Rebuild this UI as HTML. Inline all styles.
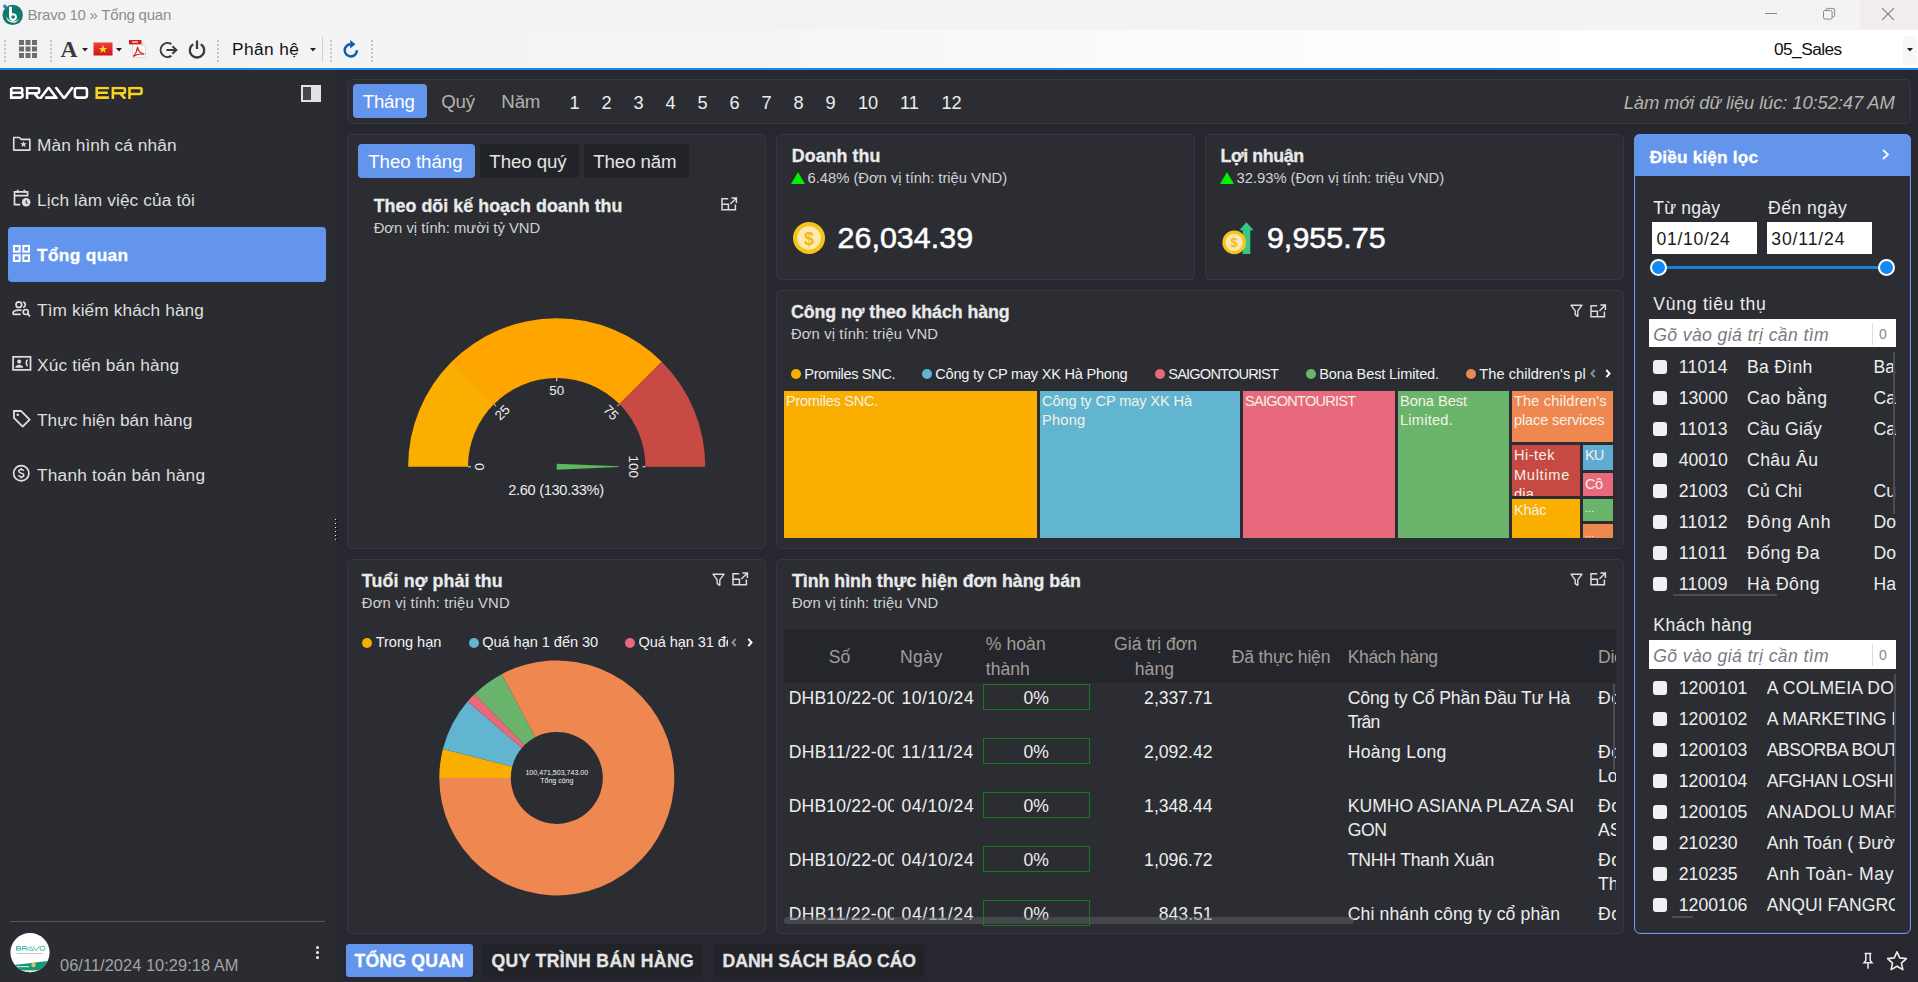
<!DOCTYPE html>
<html lang="vi"><head><meta charset="utf-8"><title>Bravo 10 - Tong quan</title>
<style>
html,body{margin:0;padding:0;}
body{width:1918px;height:982px;position:relative;overflow:hidden;background:#27282f;font-family:'Liberation Sans', sans-serif;}
.t{position:absolute;white-space:nowrap;display:block;}
.a{position:absolute;}

</style></head><body>
<div class="a" style="left:0px;top:0px;width:1918px;height:30px;background:#f3f3f3;"></div>
<div class="a" style="left:1860px;top:0px;width:58px;height:29px;background:#f2ecec;"></div>
<svg class="a" style="left:0.5px;top:2.5px;" width="23.4" height="23.4" viewBox="0 0 22 22"><circle cx="11" cy="11.2" r="9.6" fill="#0f7b68"/>
<path d="M5.2 12.5a6 6 0 0 0 11.6 2.2a6.8 6.8 0 0 1-11.6-2.2z" fill="#e9f4f1"/>
<path d="M7.6 3.6h2.7v6.1a3.7 3.7 0 1 1-2.7 3.5z" fill="#ffffff"/>
<circle cx="11.4" cy="13.2" r="1.7" fill="#0f7b68"/>
<circle cx="3.6" cy="3.2" r="1.7" fill="#2f7fe0"/></svg>
<span class="t" style="font-family:'Liberation Sans', sans-serif;font-size:15px;font-weight:400;color:#8d8d8d;line-height:20px;top:5px;letter-spacing:-0.234px;left:27.50px;">Bravo 10 » Tổng quan</span>
<div class="a" style="left:1765px;top:13px;width:12px;height:1px;background:#8a8a8a;"></div>
<svg class="a" style="left:1822px;top:7px;" width="14" height="14" viewBox="0 0 14 14"><rect x="1.5" y="3.5" width="8.6" height="8.6" rx="1.6" fill="none" stroke="#8a8a8a" stroke-width="1"/><path d="M4 3.4V3a1.6 1.6 0 0 1 1.6-1.6h5.4a1.6 1.6 0 0 1 1.6 1.6v5.4a1.6 1.6 0 0 1-1.6 1.6h-.6" fill="none" stroke="#8a8a8a" stroke-width="1"/></svg>
<svg class="a" style="left:1881px;top:7px;" width="14" height="14" viewBox="0 0 14 14"><path d="M1 1L13 13M13 1L1 13" stroke="#8a8a8a" stroke-width="1.1" fill="none"/></svg>
<div class="a" style="left:0px;top:30px;width:1918px;height:38px;background:linear-gradient(90deg,#f3f3f3 0%,#f4f4f4 35%,#fbfbfb 60%,#ffffff 85%);"></div>
<div class="a" style="left:0px;top:68px;width:1918px;height:2px;background:#1f86df;"></div>
<div class="a" style="left:4px;top:40px;width:2px;height:22px;background:repeating-linear-gradient(180deg,#c4c4c4 0 2px,transparent 2px 4px);"></div>
<div class="a" style="left:50px;top:40px;width:2px;height:22px;background:repeating-linear-gradient(180deg,#c4c4c4 0 2px,transparent 2px 4px);"></div>
<div class="a" style="left:217px;top:40px;width:2px;height:22px;background:repeating-linear-gradient(180deg,#c4c4c4 0 2px,transparent 2px 4px);"></div>
<div class="a" style="left:330px;top:40px;width:2px;height:22px;background:repeating-linear-gradient(180deg,#c4c4c4 0 2px,transparent 2px 4px);"></div>
<div class="a" style="left:371px;top:40px;width:2px;height:22px;background:repeating-linear-gradient(180deg,#c4c4c4 0 2px,transparent 2px 4px);"></div>
<svg class="a" style="left:19px;top:40px;" width="18" height="18" viewBox="0 0 18 18"><rect x="0.0" y="0.0" width="5" height="5" fill="#6e6e6e"/><rect x="6.5" y="0.0" width="5" height="5" fill="#6e6e6e"/><rect x="13.0" y="0.0" width="5" height="5" fill="#6e6e6e"/><rect x="0.0" y="6.5" width="5" height="5" fill="#6e6e6e"/><rect x="6.5" y="6.5" width="5" height="5" fill="#6e6e6e"/><rect x="13.0" y="6.5" width="5" height="5" fill="#6e6e6e"/><rect x="0.0" y="13.0" width="5" height="5" fill="#6e6e6e"/><rect x="6.5" y="13.0" width="5" height="5" fill="#6e6e6e"/><rect x="13.0" y="13.0" width="5" height="5" fill="#6e6e6e"/></svg>
<span class="t" style="font-family:'Liberation Serif', serif;font-size:23.5px;font-weight:700;color:#3a3a3a;line-height:31px;top:34px;letter-spacing:0.016px;left:60.50px;">A</span>
<svg class="a" style="left:82px;top:48px;" width="6" height="4" viewBox="0 0 6 4"><path d="M0 0H6L3 3.4Z" fill="#222"/></svg>
<svg class="a" style="left:93px;top:42px;" width="20" height="14" viewBox="0 0 20 14"><defs><linearGradient id="fg" x1="0" y1="0" x2="0" y2="1"><stop offset="0" stop-color="#e8453c"/><stop offset="1" stop-color="#d0140f"/></linearGradient></defs><rect x="0.5" y="0.5" width="19" height="13" fill="url(#fg)"/><path d="M10 2.8l1.05 3.1h3.3l-2.65 1.95 1 3.15L10 9.05 7.3 11l1-3.15L5.65 5.9h3.3z" fill="#ffe21a"/></svg>
<svg class="a" style="left:116px;top:48px;" width="6" height="4" viewBox="0 0 6 4"><path d="M0 0H6L3 3.4Z" fill="#222"/></svg>
<svg class="a" style="left:128px;top:39px;" width="20" height="20" viewBox="0 0 20 20"><path d="M4.5 2.5h8.5l4.5 4.5v11.5h-13z" fill="#fbfbfb" stroke="#d6d6d6" stroke-width=".8"/>
<path d="M13 2.5v4.5h4.5z" fill="#e4e4e4"/>
<rect x="1" y="1" width="12.5" height="4.4" fill="#d3201f"/>
<rect x="4.2" y="2.2" width="5.6" height="1.6" fill="#f7c9c8"/>
<path d="M5.6 17.2c2.2-2.6 3.6-5.6 4-9.2c.2 3.3 2.3 6 6.4 7.2c-3.300-.5-7 .1-10.4 2z" fill="none" stroke="#d3201f" stroke-width="1.2" stroke-linejoin="round"/></svg>
<svg class="a" style="left:158px;top:40px;" width="20" height="20" viewBox="0 0 20 20"><path d="M13.4 4.1A7 7 0 1 0 13.4 15.9" fill="none" stroke="#3c3c3c" stroke-width="2"/><path d="M8.4 10H18.2M14.4 6.3L18.4 10L14.4 13.7" fill="none" stroke="#3c3c3c" stroke-width="2"/></svg>
<svg class="a" style="left:187px;top:39px;" width="20" height="20" viewBox="0 0 20 20"><path d="M6.2 5.2A7.2 7.2 0 1 0 13.8 5.2" fill="none" stroke="#3c3c3c" stroke-width="2.300"/><path d="M10 1.5V10" stroke="#3c3c3c" stroke-width="2.300"/></svg>
<span class="t" style="font-family:'Liberation Sans', sans-serif;font-size:17.3px;font-weight:400;color:#111111;line-height:22px;top:38px;letter-spacing:0.430px;left:232.00px;">Phân hệ</span>
<svg class="a" style="left:309.5px;top:48px;" width="6" height="4" viewBox="0 0 6 4"><path d="M0 0H6L3 3.4Z" fill="#222"/></svg>
<div class="a" style="left:322px;top:37px;width:1px;height:25px;background:#cfcfcf;"></div>
<svg class="a" style="left:342px;top:39px;" width="18" height="20" viewBox="0 0 18 20"><path d="M14.9 11.2A6.1 6.1 0 1 1 8.7 5.2" fill="none" stroke="#0e5ea8" stroke-width="2.5"/><path d="M8.2 1.0L13.4 5.3L8.2 9.6Z" fill="#0e5ea8"/></svg>
<div class="a" style="left:1768px;top:31px;width:150px;height:37px;background:#ffffff;"></div>
<span class="t" style="font-family:'Liberation Sans', sans-serif;font-size:17.3px;font-weight:400;color:#111111;line-height:22px;top:38px;letter-spacing:-0.558px;left:1774.00px;">05_Sales</span>
<div class="a" style="left:1903px;top:36px;width:14px;height:29px;background:#f7f7f7;"></div>
<svg class="a" style="left:1906.5px;top:47.5px;" width="6" height="4" viewBox="0 0 6 4"><path d="M0 0H6L3 3.4Z" fill="#222"/></svg>
<div class="a" style="left:0px;top:70px;width:337px;height:912px;background:#2b2c31;"></div>
<svg class="a" style="left:5px;top:80px;" width="145" height="26" viewBox="0 0 1918 344"><defs><clipPath id="lgc"><rect x="0" y="88" width="1918" height="162"/></clipPath></defs><g clip-path="url(#lgc)"><g fill="none" stroke="#ffffff" stroke-width="34" stroke-linejoin="miter"><path d="M82 105H203Q228 105 228 128V146Q228 169 203 169H82M203 169Q232 169 232 192V210Q232 233 203 233H82V105"/><path d="M292 250V105H425Q452 105 452 130V150Q452 175 425 175H292M385 175L452 250"/><path d="M462 250L577 100L690 250M532 233H676"/><path d="M668 92L782 243L897 92"/><rect x="924" y="105" width="160" height="128" rx="30"/></g><g fill="none" stroke="#f7d21e" stroke-width="34" stroke-linejoin="miter"><path d="M1375 105H1213V233H1375M1213 169H1360"/><path d="M1427 250V105H1560Q1587 105 1587 130V150Q1587 175 1560 175H1427M1522 175L1590 250"/><path d="M1647 250V105H1780Q1807 105 1807 132V158Q1807 185 1780 185H1647"/></g></g></svg>
<div class="a" style="left:301px;top:85px;width:16px;height:13px;border:2px solid #e2e2e2;background:linear-gradient(90deg,#46474d 0 50%,#e2e2e2 50% 100%);"></div>
<svg class="a" style="left:12.0px;top:133.7px;" width="19.6" height="19.6" viewBox="0 0 18 18"><path d="M1.6 3.2h5.2l1.5 1.7h8.1v9.9H1.6z" fill="none" stroke="#dedede" stroke-width="1.5" stroke-linejoin="round"/><path d="M10.6 6.6l.85 2h2.1l-1.7 1.35.65 2.15-1.9-1.3-1.9 1.3.65-2.15-1.7-1.35h2.1z" fill="#dedede"/></svg>
<span class="t" style="font-family:'Liberation Sans', sans-serif;font-size:17.3px;font-weight:400;color:#dedede;line-height:22px;top:134px;letter-spacing:0.078px;left:37.00px;">Màn hình cá nhân</span>
<svg class="a" style="left:12.0px;top:187.9px;" width="19.6" height="19.6" viewBox="0 0 18 18"><path d="M7.5 15.3H2.3V3.6h12v4.2M2.3 7h12M5.2 1.6v3M11.4 1.6v3" fill="none" stroke="#dedede" stroke-width="1.6"/><circle cx="13" cy="13.2" r="3.9" fill="#dedede"/><path d="M13 11.2v2.2l1.4.9" stroke="#2b2c31" stroke-width="1" fill="none"/></svg>
<span class="t" style="font-family:'Liberation Sans', sans-serif;font-size:17.3px;font-weight:400;color:#dedede;line-height:22px;top:189px;letter-spacing:0.114px;left:37.00px;">Lịch làm việc của tôi</span>
<div class="a" style="left:8px;top:227px;width:318px;height:55px;background:#6495ed;border-radius:4px;"></div>
<svg class="a" style="left:12.0px;top:243.7px;" width="19.6" height="19.6" viewBox="0 0 18 18"><rect x="1.8" y="1.8" width="5.2" height="5.2" fill="none" stroke="#ffffff" stroke-width="1.9"/><rect x="10.4" y="1.8" width="5.2" height="5.2" fill="none" stroke="#ffffff" stroke-width="1.9"/><rect x="1.8" y="10.4" width="5.2" height="5.2" fill="none" stroke="#ffffff" stroke-width="1.9"/><rect x="10.4" y="10.4" width="5.2" height="5.2" fill="none" stroke="#ffffff" stroke-width="1.9"/></svg>
<span class="t" style="font-family:'Liberation Sans', sans-serif;font-size:17.3px;font-weight:700;color:#ffffff;line-height:22px;top:244px;letter-spacing:0.343px;left:37.00px;-webkit-text-stroke:0.3px #ffffff;">Tổng quan</span>
<svg class="a" style="left:12.0px;top:298.7px;" width="19.6" height="19.6" viewBox="0 0 18 18"><circle cx="6.3" cy="5.2" r="2.6" fill="none" stroke="#dedede" stroke-width="1.6"/><path d="M1 14.3v-1.1c0-2 2.700-3 5.300-3c.9 0 1.700.1 2.500.3" fill="none" stroke="#dedede" stroke-width="1.6"/><path d="M1 14.1h7" stroke="#dedede" stroke-width="1.6"/><path d="M10.300 2.700a2.600 2.600 0 0 1 0 5" fill="none" stroke="#dedede" stroke-width="1.6"/><circle cx="12.6" cy="11.900" r="2.300" fill="none" stroke="#dedede" stroke-width="1.5"/><path d="M14.300 13.700l2.300 2.300" stroke="#dedede" stroke-width="1.6"/></svg>
<span class="t" style="font-family:'Liberation Sans', sans-serif;font-size:17.3px;font-weight:400;color:#dedede;line-height:22px;top:299px;letter-spacing:0.095px;left:37.00px;">Tìm kiếm khách hàng</span>
<svg class="a" style="left:12.0px;top:353.7px;" width="19.6" height="19.6" viewBox="0 0 18 18"><rect x="1" y="2.6" width="16" height="12" fill="none" stroke="#dedede" stroke-width="1.6"/><circle cx="6.6" cy="7" r="1.9" fill="#dedede"/><path d="M3 12.600c0-1.900 2.300-2.700 3.600-2.700s3.600.8 3.600 2.700z" fill="#dedede"/><path d="M14.400 5.200c-1.700.8-1.700 5 0 5.800" fill="none" stroke="#dedede" stroke-width="1.500"/></svg>
<span class="t" style="font-family:'Liberation Sans', sans-serif;font-size:17.3px;font-weight:400;color:#dedede;line-height:22px;top:354px;letter-spacing:0.175px;left:37.00px;">Xúc tiến bán hàng</span>
<svg class="a" style="left:12.0px;top:408.7px;" width="19.6" height="19.6" viewBox="0 0 18 18"><path d="M1.8 1.800h6.400l8 8-6.400 6.400-8-8z" fill="none" stroke="#dedede" stroke-width="1.7" stroke-linejoin="round"/><circle cx="5.300" cy="5.300" r="1.200" fill="#dedede"/></svg>
<span class="t" style="font-family:'Liberation Sans', sans-serif;font-size:17.3px;font-weight:400;color:#dedede;line-height:22px;top:409px;letter-spacing:0.031px;left:37.00px;">Thực hiện bán hàng</span>
<svg class="a" style="left:12.0px;top:463.7px;" width="19.6" height="19.6" viewBox="0 0 18 18"><circle cx="8.500" cy="8.500" r="7" fill="none" stroke="#dedede" stroke-width="1.600"/><path d="M10.800 6.300c-.3-.8-1.200-1.300-2.300-1.300-1.300 0-2.300.7-2.300 1.700 0 2.400 4.700 1.100 4.700 3.500 0 1-1 1.700-2.400 1.700-1.200 0-2.200-.6-2.500-1.500M8.500 3.600v1.400M8.500 11.900v1.400" fill="none" stroke="#dedede" stroke-width="1.400"/></svg>
<span class="t" style="font-family:'Liberation Sans', sans-serif;font-size:17.3px;font-weight:400;color:#dedede;line-height:22px;top:464px;letter-spacing:0.204px;left:37.00px;">Thanh toán bán hàng</span>
<div class="a" style="left:335px;top:519px;width:1px;height:1px;background:#e8e8e8;"></div>
<div class="a" style="left:336px;top:520px;width:1px;height:1px;background:#000;"></div>
<div class="a" style="left:335px;top:523px;width:1px;height:1px;background:#e8e8e8;"></div>
<div class="a" style="left:336px;top:524px;width:1px;height:1px;background:#000;"></div>
<div class="a" style="left:335px;top:527px;width:1px;height:1px;background:#e8e8e8;"></div>
<div class="a" style="left:336px;top:528px;width:1px;height:1px;background:#000;"></div>
<div class="a" style="left:335px;top:531px;width:1px;height:1px;background:#e8e8e8;"></div>
<div class="a" style="left:336px;top:532px;width:1px;height:1px;background:#000;"></div>
<div class="a" style="left:335px;top:535px;width:1px;height:1px;background:#e8e8e8;"></div>
<div class="a" style="left:336px;top:536px;width:1px;height:1px;background:#000;"></div>
<div class="a" style="left:335px;top:539px;width:1px;height:1px;background:#e8e8e8;"></div>
<div class="a" style="left:336px;top:540px;width:1px;height:1px;background:#000;"></div>
<div class="a" style="left:10px;top:921px;width:315px;height:1px;background:#56575c;"></div>
<svg class="a" style="left:9px;top:932px;" width="42" height="42" viewBox="0 0 42 42"><defs><clipPath id="av"><circle cx="21" cy="20.6" r="19.6"/></clipPath></defs>
<circle cx="21" cy="20.6" r="19.6" fill="#ffffff"/>
<g clip-path="url(#av)"><path d="M0 33.500L42 28.600V42H0Z" fill="#12997a"/><rect x="0" y="38.300" width="42" height="4" fill="#f3efc0"/>
<circle cx="24.500" cy="33" r="2.200" fill="#f0c060"/><rect x="8" y="34" width="12" height="1.200" fill="#bfe3d6"/></g>
<g transform="translate(5.200 11.600) scale(0.0282)" fill="none" stroke="#16a08a" stroke-width="26"><path d="M82 105H203Q228 105 228 128V146Q228 169 203 169H82M203 169Q232 169 232 192V210Q232 233 203 233H82V105"/><path d="M292 250V105H425Q452 105 452 130V150Q452 175 425 175H292M385 175L452 250"/><path d="M462 250L577 100L690 250M532 233H676"/><path d="M668 92L782 243L897 92"/><rect x="924" y="105" width="160" height="128" rx="30"/></g>
<rect x="8" y="21.200" width="26" height="0.800" fill="#9a9a9a" opacity=".7"/></svg>
<span class="t" style="font-family:'Liberation Sans', sans-serif;font-size:16.4px;font-weight:400;color:#a4a4a4;line-height:21px;top:955px;letter-spacing:0.049px;left:60.00px;">06/11/2024 10:29:18 AM</span>
<div class="a" style="left:315.5px;top:945.5px;width:3px;height:3px;border-radius:50%;background:#f0f0f0;"></div>
<div class="a" style="left:315.5px;top:950.5px;width:3px;height:3px;border-radius:50%;background:#f0f0f0;"></div>
<div class="a" style="left:315.5px;top:955.5px;width:3px;height:3px;border-radius:50%;background:#f0f0f0;"></div>
<div class="a" style="left:347px;top:79px;width:1562px;height:43px;background:#2b2d33;border:1px solid #36383e;border-radius:5px;"></div>
<div class="a" style="left:347px;top:134px;width:417px;height:413px;background:#2b2d33;border:1px solid #36383e;border-radius:5px;"></div>
<div class="a" style="left:776px;top:134px;width:417px;height:144px;background:#2b2d33;border:1px solid #36383e;border-radius:5px;"></div>
<div class="a" style="left:1205px;top:134px;width:417px;height:144px;background:#2b2d33;border:1px solid #36383e;border-radius:5px;"></div>
<div class="a" style="left:776px;top:290px;width:846px;height:257px;background:#2b2d33;border:1px solid #36383e;border-radius:5px;"></div>
<div class="a" style="left:347px;top:559px;width:417px;height:373px;background:#2b2d33;border:1px solid #36383e;border-radius:5px;"></div>
<div class="a" style="left:776px;top:559px;width:846px;height:373px;background:#2b2d33;border:1px solid #36383e;border-radius:5px;"></div>
<div class="a" style="left:353px;top:84px;width:74px;height:34px;background:#6495ed;border-radius:4px;"></div>
<span class="t" style="font-family:'Liberation Sans', sans-serif;font-size:18.7px;font-weight:400;color:#ffffff;line-height:24px;top:90px;letter-spacing:-0.200px;left:362.70px;">Tháng</span>
<span class="t" style="font-family:'Liberation Sans', sans-serif;font-size:18.7px;font-weight:400;color:#b4b1ac;line-height:24px;top:90px;letter-spacing:-0.294px;left:441.30px;">Quý</span>
<span class="t" style="font-family:'Liberation Sans', sans-serif;font-size:18.7px;font-weight:400;color:#b4b1ac;line-height:24px;top:90px;letter-spacing:-0.156px;left:501.30px;">Năm</span>
<span class="t" style="font-family:'Liberation Sans', sans-serif;font-size:18.2px;font-weight:400;color:#ededed;line-height:24px;top:91px;left:569.44px;">1</span>
<span class="t" style="font-family:'Liberation Sans', sans-serif;font-size:18.2px;font-weight:400;color:#ededed;line-height:24px;top:91px;left:601.44px;">2</span>
<span class="t" style="font-family:'Liberation Sans', sans-serif;font-size:18.2px;font-weight:400;color:#ededed;line-height:24px;top:91px;left:633.44px;">3</span>
<span class="t" style="font-family:'Liberation Sans', sans-serif;font-size:18.2px;font-weight:400;color:#ededed;line-height:24px;top:91px;left:665.44px;">4</span>
<span class="t" style="font-family:'Liberation Sans', sans-serif;font-size:18.2px;font-weight:400;color:#ededed;line-height:24px;top:91px;left:697.44px;">5</span>
<span class="t" style="font-family:'Liberation Sans', sans-serif;font-size:18.2px;font-weight:400;color:#ededed;line-height:24px;top:91px;left:729.44px;">6</span>
<span class="t" style="font-family:'Liberation Sans', sans-serif;font-size:18.2px;font-weight:400;color:#ededed;line-height:24px;top:91px;left:761.44px;">7</span>
<span class="t" style="font-family:'Liberation Sans', sans-serif;font-size:18.2px;font-weight:400;color:#ededed;line-height:24px;top:91px;left:793.44px;">8</span>
<span class="t" style="font-family:'Liberation Sans', sans-serif;font-size:18.2px;font-weight:400;color:#ededed;line-height:24px;top:91px;left:825.44px;">9</span>
<span class="t" style="font-family:'Liberation Sans', sans-serif;font-size:18.2px;font-weight:400;color:#ededed;line-height:24px;top:91px;left:857.88px;">10</span>
<span class="t" style="font-family:'Liberation Sans', sans-serif;font-size:18.2px;font-weight:400;color:#ededed;line-height:24px;top:91px;left:900.05px;">11</span>
<span class="t" style="font-family:'Liberation Sans', sans-serif;font-size:18.2px;font-weight:400;color:#ededed;line-height:24px;top:91px;left:941.38px;">12</span>
<span class="t" style="font-family:'Liberation Sans', sans-serif;font-size:18.4px;font-weight:400;font-style:italic;color:#b9b4ac;line-height:24px;top:91px;letter-spacing:-0.112px;left:1623.70px;">Làm mới dữ liệu lúc: 10:52:47 AM</span>
<div class="a" style="left:358px;top:144px;width:117px;height:34px;background:#6495ed;border-radius:4px;"></div>
<div class="a" style="left:480px;top:144px;width:99px;height:34px;background:#222328;border-radius:4px;"></div>
<div class="a" style="left:584px;top:144px;width:105px;height:34px;background:#222328;border-radius:4px;"></div>
<span class="t" style="font-family:'Liberation Sans', sans-serif;font-size:18.7px;font-weight:400;color:#ffffff;line-height:24px;top:150px;letter-spacing:-0.016px;left:368.20px;">Theo tháng</span>
<span class="t" style="font-family:'Liberation Sans', sans-serif;font-size:18.7px;font-weight:400;color:#e4e4e4;line-height:24px;top:150px;letter-spacing:-0.078px;left:489.30px;">Theo quý</span>
<span class="t" style="font-family:'Liberation Sans', sans-serif;font-size:18.7px;font-weight:400;color:#e4e4e4;line-height:24px;top:150px;letter-spacing:-0.118px;left:593.30px;">Theo năm</span>
<span class="t" style="font-family:'Liberation Sans', sans-serif;font-size:17.8px;font-weight:700;color:#eaeaea;line-height:23px;top:195px;letter-spacing:0.068px;left:373.70px;-webkit-text-stroke:0.3px #eaeaea;">Theo dõi kế hoạch doanh thu</span>
<span class="t" style="font-family:'Liberation Sans', sans-serif;font-size:14.8px;font-weight:400;color:#d2d2d2;line-height:19px;top:219px;letter-spacing:-0.005px;left:373.70px;">Đơn vị tính: mười tỷ VND</span>
<svg class="a" style="left:721px;top:196.8px;" width="17" height="14" viewBox="0 0 17 14"><path d="M7.200 1.800H1v11h13.400V7.400" fill="none" stroke="#dcdcdc" stroke-width="1.500"/><path d="M1 7.200h6.400v5.600" fill="none" stroke="#dcdcdc" stroke-width="1.500"/><path d="M10.400 1h5v5M15.400 1L9.400 7" fill="none" stroke="#dcdcdc" stroke-width="1.500"/></svg>
<svg class="a" style="left:0;top:0;" width="1918" height="982" viewBox="0 0 1918 982"><path d="M408.10 466.80A148.6 148.6 0 0 1 451.62 361.72L493.98 404.08A88.7 88.7 0 0 0 468.00 466.80Z" fill="#f9ae00"/><path d="M451.08 362.28A148.6 148.6 0 0 1 661.78 361.72L619.42 404.08A88.7 88.7 0 0 0 493.65 404.41Z" fill="#ffa500"/><path d="M661.78 361.72A148.6 148.6 0 0 1 705.30 466.80L645.40 466.80A88.7 88.7 0 0 0 619.42 404.08Z" fill="#c74a44"/><path d="M468.00 466.80L471.00 466.80" stroke="#e8e8e8" stroke-width="1"/><path d="M493.98 404.08L496.10 406.20" stroke="#e8e8e8" stroke-width="1"/><path d="M556.70 378.10L556.70 381.10" stroke="#e8e8e8" stroke-width="1"/><path d="M619.42 404.08L617.30 406.20" stroke="#e8e8e8" stroke-width="1"/><path d="M645.40 466.80L642.40 466.80" stroke="#e8e8e8" stroke-width="1"/><path d="M556.7 463.8L618.7 466.2L618.7 467.0L556.7 469.8Z" fill="#5cb85c"/><text x="479.50" y="466.80" transform="rotate(-90 479.50 466.80)" text-anchor="middle" dominant-baseline="central" font-family="Liberation Sans, sans-serif" font-size="13.4" fill="#eeeeee">0</text><text x="502.46" y="412.56" transform="rotate(-45 502.46 412.56)" text-anchor="middle" dominant-baseline="central" font-family="Liberation Sans, sans-serif" font-size="13.4" fill="#eeeeee">25</text><text x="556.70" y="390.60" transform="rotate(0 556.70 390.60)" text-anchor="middle" dominant-baseline="central" font-family="Liberation Sans, sans-serif" font-size="13.4" fill="#eeeeee">50</text><text x="610.94" y="412.56" transform="rotate(45 610.94 412.56)" text-anchor="middle" dominant-baseline="central" font-family="Liberation Sans, sans-serif" font-size="13.4" fill="#eeeeee">75</text><text x="633.90" y="466.80" transform="rotate(90 633.90 466.80)" text-anchor="middle" dominant-baseline="central" font-family="Liberation Sans, sans-serif" font-size="13.4" fill="#eeeeee">100</text></svg>
<span class="t" style="font-family:'Liberation Sans', sans-serif;font-size:14.6px;font-weight:400;color:#ededed;line-height:19px;top:481px;letter-spacing:-0.307px;left:508.25px;">2.60 (130.33%)</span>
<span class="t" style="font-family:'Liberation Sans', sans-serif;font-size:17.8px;font-weight:700;color:#eaeaea;line-height:23px;top:145px;letter-spacing:0.088px;left:791.80px;-webkit-text-stroke:0.3px #eaeaea;">Doanh thu</span>
<svg class="a" style="left:791px;top:172px;" width="14" height="12" viewBox="0 0 14 12"><path d="M7 0L14 12H0Z" fill="#00f000"/></svg>
<span class="t" style="font-family:'Liberation Sans', sans-serif;font-size:14.8px;font-weight:400;color:#d2d2d2;line-height:19px;top:169px;letter-spacing:-0.030px;left:807.50px;">6.48% (Đơn vị tính: triệu VND)</span>
<svg class="a" style="left:792px;top:221px;" width="34" height="34" viewBox="0 0 34 34"><circle cx="17" cy="17" r="16" fill="#f6c51b"/><circle cx="17" cy="17" r="11.800" fill="#fdeab2"/><text x="17" y="23.500" text-anchor="middle" font-family="Liberation Sans, sans-serif" font-weight="700" font-size="18" fill="#f3b90d">$</text></svg>
<span class="t" style="font-family:'Liberation Sans', sans-serif;font-size:30.4px;font-weight:400;color:#ffffff;line-height:40px;top:217px;letter-spacing:0.055px;left:837.50px;-webkit-text-stroke:0.55px #ffffff;">26,034.39</span>
<span class="t" style="font-family:'Liberation Sans', sans-serif;font-size:17.8px;font-weight:700;color:#eaeaea;line-height:23px;top:145px;letter-spacing:-0.391px;left:1220.50px;-webkit-text-stroke:0.3px #eaeaea;">Lợi nhuận</span>
<svg class="a" style="left:1220px;top:172px;" width="14" height="12" viewBox="0 0 14 12"><path d="M7 0L14 12H0Z" fill="#00f000"/></svg>
<span class="t" style="font-family:'Liberation Sans', sans-serif;font-size:14.8px;font-weight:400;color:#d2d2d2;line-height:19px;top:169px;letter-spacing:-0.039px;left:1236.60px;">32.93% (Đơn vị tính: triệu VND)</span>
<svg class="a" style="left:1220px;top:220px;" width="36" height="36" viewBox="0 0 36 36"><path d="M26.400 2.200L33.600 10.200H30.300V34H22.600V10.200H19.200Z" fill="#38c784"/><circle cx="14.200" cy="22.400" r="11.800" fill="#f6c51b"/><circle cx="14.200" cy="22.400" r="8.600" fill="#fdeab2"/><text x="14.200" y="27" text-anchor="middle" font-family="Liberation Sans, sans-serif" font-weight="700" font-size="13" fill="#f3b90d">$</text></svg>
<span class="t" style="font-family:'Liberation Sans', sans-serif;font-size:30.4px;font-weight:400;color:#ffffff;line-height:40px;top:217px;letter-spacing:0.073px;left:1266.90px;-webkit-text-stroke:0.55px #ffffff;">9,955.75</span>
<span class="t" style="font-family:'Liberation Sans', sans-serif;font-size:17.8px;font-weight:700;color:#eaeaea;line-height:23px;top:301px;letter-spacing:-0.065px;left:791.00px;-webkit-text-stroke:0.3px #eaeaea;">Công nợ theo khách hàng</span>
<span class="t" style="font-family:'Liberation Sans', sans-serif;font-size:14.8px;font-weight:400;color:#d2d2d2;line-height:19px;top:325px;letter-spacing:0.110px;left:791.00px;">Đơn vị tính: triệu VND</span>
<svg class="a" style="left:1570px;top:304px;" width="13" height="14" viewBox="0 0 13 14"><path d="M1 1.200h11L7.800 6.800v5.600l-2.600-1.700V6.800z" fill="none" stroke="#dcdcdc" stroke-width="1.400" stroke-linejoin="round"/></svg>
<svg class="a" style="left:1590px;top:303.5px;" width="17" height="14" viewBox="0 0 17 14"><path d="M7.200 1.800H1v11h13.400V7.400" fill="none" stroke="#dcdcdc" stroke-width="1.500"/><path d="M1 7.200h6.400v5.600" fill="none" stroke="#dcdcdc" stroke-width="1.500"/><path d="M10.400 1h5v5M15.400 1L9.400 7" fill="none" stroke="#dcdcdc" stroke-width="1.500"/></svg>
<div class="a" style="left:791px;top:369px;width:10px;height:10px;border-radius:50%;background:#f9ae00;"></div>
<span class="t" style="font-family:'Liberation Sans', sans-serif;font-size:14.6px;font-weight:400;color:#f2f2f2;line-height:19px;top:365px;letter-spacing:-0.376px;left:804.30px;">Promiles SNC.</span>
<div class="a" style="left:922px;top:369px;width:10px;height:10px;border-radius:50%;background:#62b5d1;"></div>
<span class="t" style="font-family:'Liberation Sans', sans-serif;font-size:14.6px;font-weight:400;color:#f2f2f2;line-height:19px;top:365px;letter-spacing:-0.242px;left:935.30px;">Công ty CP may XK Hà Phong</span>
<div class="a" style="left:1155px;top:369px;width:10px;height:10px;border-radius:50%;background:#e8697b;"></div>
<span class="t" style="font-family:'Liberation Sans', sans-serif;font-size:14.6px;font-weight:400;color:#f2f2f2;line-height:19px;top:365px;letter-spacing:-0.828px;left:1168.30px;">SAIGONTOURIST</span>
<div class="a" style="left:1306px;top:369px;width:10px;height:10px;border-radius:50%;background:#6ab56b;"></div>
<span class="t" style="font-family:'Liberation Sans', sans-serif;font-size:14.6px;font-weight:400;color:#f2f2f2;line-height:19px;top:365px;letter-spacing:-0.150px;left:1319.20px;">Bona Best Limited.</span>
<div class="a" style="left:1466px;top:369px;width:10px;height:10px;border-radius:50%;background:#ee8850;"></div>
<span class="t" style="font-family:'Liberation Sans', sans-serif;font-size:14.6px;font-weight:400;color:#f2f2f2;line-height:19px;top:365px;letter-spacing:0.040px;left:1479.30px;width:107.50px;overflow:hidden;">The children&#x27;s pl</span>
<svg class="a" style="left:1589.8px;top:368.9px;" width="6" height="9" viewBox="0 0 6 9"><path d="M4.700 0.900L1.500 4.500L4.700 8.100" fill="none" stroke="#8f8f93" stroke-width="2"/></svg>
<svg class="a" style="left:1604.5px;top:368.9px;" width="6" height="9" viewBox="0 0 6 9"><path d="M1.300 0.900L4.500 4.500L1.300 8.100" fill="none" stroke="#ffffff" stroke-width="2"/></svg>
<div class="a" style="left:784px;top:391px;width:253px;height:147px;background:#f9ae00;overflow:hidden;">
<span class="t" style="font-family:'Liberation Sans', sans-serif;font-size:14.6px;font-weight:400;color:#f4f1e6;line-height:19px;top:1px;letter-spacing:-0.284px;left:2.00px;">Promiles SNC.</span>
</div>
<div class="a" style="left:1040px;top:391px;width:200px;height:147px;background:#62b5d1;overflow:hidden;">
<span class="t" style="font-family:'Liberation Sans', sans-serif;font-size:14.6px;font-weight:400;color:#f4f1e6;line-height:19px;top:1px;letter-spacing:-0.111px;left:2.00px;">Công ty CP may XK Hà</span>
<span class="t" style="font-family:'Liberation Sans', sans-serif;font-size:14.6px;font-weight:400;color:#f4f1e6;line-height:19px;top:20px;letter-spacing:0.259px;left:2.00px;">Phong</span>
</div>
<div class="a" style="left:1243px;top:391px;width:152px;height:147px;background:#e8697b;overflow:hidden;">
<span class="t" style="font-family:'Liberation Sans', sans-serif;font-size:14.6px;font-weight:400;color:#f4f1e6;line-height:19px;top:1px;letter-spacing:-0.782px;left:2.00px;">SAIGONTOURIST</span>
</div>
<div class="a" style="left:1398px;top:391px;width:111px;height:147px;background:#6ab56b;overflow:hidden;">
<span class="t" style="font-family:'Liberation Sans', sans-serif;font-size:14.6px;font-weight:400;color:#f4f1e6;line-height:19px;top:1px;letter-spacing:-0.038px;left:2.00px;">Bona Best</span>
<span class="t" style="font-family:'Liberation Sans', sans-serif;font-size:14.6px;font-weight:400;color:#f4f1e6;line-height:19px;top:20px;letter-spacing:0.236px;left:2.00px;">Limited.</span>
</div>
<div class="a" style="left:1512px;top:391px;width:101px;height:50.5px;background:#ee8850;overflow:hidden;">
<span class="t" style="font-family:'Liberation Sans', sans-serif;font-size:14.6px;font-weight:400;color:#f4f1e6;line-height:19px;top:1px;letter-spacing:0.157px;left:2.00px;">The children&#x27;s</span>
<span class="t" style="font-family:'Liberation Sans', sans-serif;font-size:14.6px;font-weight:400;color:#f4f1e6;line-height:19px;top:20px;letter-spacing:-0.141px;left:2.00px;">place services</span>
</div>
<div class="a" style="left:1512px;top:445px;width:68px;height:51px;background:#c74943;overflow:hidden;">
<span class="t" style="font-family:'Liberation Sans', sans-serif;font-size:14.6px;font-weight:400;color:#f4f1e6;line-height:19px;top:1px;letter-spacing:0.482px;left:2.00px;">Hi-tek</span>
<span class="t" style="font-family:'Liberation Sans', sans-serif;font-size:14.6px;font-weight:400;color:#f4f1e6;line-height:19px;top:21px;letter-spacing:0.701px;left:2.00px;">Multime</span>
<span class="t" style="font-family:'Liberation Sans', sans-serif;font-size:14.6px;font-weight:400;color:#f4f1e6;line-height:19px;top:40px;letter-spacing:0.172px;left:2.00px;">dia</span>
</div>
<div class="a" style="left:1583px;top:445px;width:30px;height:25px;background:#5fabd2;overflow:hidden;">
<span class="t" style="font-family:'Liberation Sans', sans-serif;font-size:14.6px;font-weight:400;color:#f4f1e6;line-height:19px;top:1px;letter-spacing:-0.891px;left:2.00px;">KU</span>
<span class="t" style="font-family:'Liberation Sans', sans-serif;font-size:14.6px;font-weight:400;color:#f4f1e6;line-height:19px;top:21px;left:2.00px;">M</span>
</div>
<div class="a" style="left:1583px;top:473px;width:30px;height:23px;background:#e8697b;overflow:hidden;">
<span class="t" style="font-family:'Liberation Sans', sans-serif;font-size:14.6px;font-weight:400;color:#f4f1e6;line-height:19px;top:2px;letter-spacing:-0.578px;left:2.00px;">Cô</span>
</div>
<div class="a" style="left:1512px;top:499px;width:68px;height:39px;background:#f9ae00;overflow:hidden;">
<span class="t" style="font-family:'Liberation Sans', sans-serif;font-size:14.6px;font-weight:400;color:#f4f1e6;line-height:19px;top:2px;letter-spacing:-0.241px;left:2.00px;">Khác</span>
</div>
<div class="a" style="left:1583px;top:499px;width:30px;height:22px;background:#6ab56b;overflow:hidden;">
<span class="t" style="font-family:'Liberation Sans', sans-serif;font-size:11px;font-weight:400;color:#f4f1e6;line-height:14px;top:2px;left:2.00px;">...</span>
</div>
<div class="a" style="left:1583px;top:524px;width:30px;height:14px;background:#ee8850;overflow:hidden;">
<span class="t" style="font-family:'Liberation Sans', sans-serif;font-size:11px;font-weight:400;color:#f4f1e6;line-height:14px;top:2px;left:2.00px;">...</span>
</div>
<span class="t" style="font-family:'Liberation Sans', sans-serif;font-size:17.8px;font-weight:700;color:#eaeaea;line-height:23px;top:570px;letter-spacing:0.142px;left:361.80px;-webkit-text-stroke:0.3px #eaeaea;">Tuổi nợ phải thu</span>
<span class="t" style="font-family:'Liberation Sans', sans-serif;font-size:14.8px;font-weight:400;color:#d2d2d2;line-height:19px;top:594px;letter-spacing:0.156px;left:361.80px;">Đơn vị tính: triệu VND</span>
<svg class="a" style="left:711.5px;top:572.5px;" width="13" height="14" viewBox="0 0 13 14"><path d="M1 1.200h11L7.800 6.800v5.600l-2.600-1.700V6.800z" fill="none" stroke="#dcdcdc" stroke-width="1.400" stroke-linejoin="round"/></svg>
<svg class="a" style="left:732px;top:572px;" width="17" height="14" viewBox="0 0 17 14"><path d="M7.200 1.800H1v11h13.400V7.400" fill="none" stroke="#dcdcdc" stroke-width="1.500"/><path d="M1 7.200h6.400v5.600" fill="none" stroke="#dcdcdc" stroke-width="1.500"/><path d="M10.400 1h5v5M15.400 1L9.400 7" fill="none" stroke="#dcdcdc" stroke-width="1.500"/></svg>
<div class="a" style="left:361.6px;top:637.5px;width:10px;height:10px;border-radius:50%;background:#f9ae00;"></div>
<span class="t" style="font-family:'Liberation Sans', sans-serif;font-size:14.6px;font-weight:400;color:#f2f2f2;line-height:19px;top:633px;letter-spacing:-0.044px;left:375.70px;">Trong hạn</span>
<div class="a" style="left:468.8px;top:637.5px;width:10px;height:10px;border-radius:50%;background:#62b5d1;"></div>
<span class="t" style="font-family:'Liberation Sans', sans-serif;font-size:14.6px;font-weight:400;color:#f2f2f2;line-height:19px;top:633px;letter-spacing:-0.054px;left:482.20px;">Quá hạn 1 đến 30</span>
<div class="a" style="left:624.9px;top:637.5px;width:10px;height:10px;border-radius:50%;background:#e8697b;"></div>
<span class="t" style="font-family:'Liberation Sans', sans-serif;font-size:14.6px;font-weight:400;color:#f2f2f2;line-height:19px;top:633px;letter-spacing:-0.116px;left:638.60px;width:89.00px;overflow:hidden;">Quá hạn 31 đến 60</span>
<svg class="a" style="left:731.4px;top:637.9px;" width="6" height="9" viewBox="0 0 6 9"><path d="M4.700 0.900L1.500 4.500L4.700 8.100" fill="none" stroke="#8f8f93" stroke-width="2"/></svg>
<svg class="a" style="left:746.9px;top:637.9px;" width="6" height="9" viewBox="0 0 6 9"><path d="M1.300 0.900L4.500 4.500L1.300 8.100" fill="none" stroke="#ffffff" stroke-width="2"/></svg>
<svg class="a" style="left:0;top:0;" width="1918" height="982" viewBox="0 0 1918 982"><path d="M439.30 777.90A117.5 117.5 0 0 1 442.89 749.08L512.21 766.62A46 46 0 0 0 510.80 777.90Z" fill="#f9ae00"/><path d="M442.89 749.08A117.5 117.5 0 0 1 467.59 701.43L521.87 747.96A46 46 0 0 0 512.21 766.62Z" fill="#62b5d1"/><path d="M467.59 701.43A117.5 117.5 0 0 1 474.59 693.95L524.62 745.03A46 46 0 0 0 521.87 747.96Z" fill="#e8697b"/><path d="M474.59 693.95A117.5 117.5 0 0 1 501.64 674.15L535.20 737.28A46 46 0 0 0 524.62 745.03Z" fill="#6ab56b"/><path d="M501.64 674.15A117.5 117.5 0 1 1 439.30 777.90L510.80 777.90A46 46 0 1 0 535.20 737.28Z" fill="#ee8850"/><text x="556.8" y="774.8" text-anchor="middle" font-family="Liberation Sans, sans-serif" font-size="6.800" fill="#f2f2f2" textLength="62.7" lengthAdjust="spacingAndGlyphs">100,471,503,743.00</text><text x="556.8" y="783.3" text-anchor="middle" font-family="Liberation Sans, sans-serif" font-size="6.800" fill="#f2f2f2" textLength="33" lengthAdjust="spacingAndGlyphs">Tổng cộng</text></svg>
<span class="t" style="font-family:'Liberation Sans', sans-serif;font-size:17.8px;font-weight:700;color:#eaeaea;line-height:23px;top:570px;letter-spacing:-0.008px;left:791.90px;-webkit-text-stroke:0.3px #eaeaea;">Tình hình thực hiện đơn hàng bán</span>
<span class="t" style="font-family:'Liberation Sans', sans-serif;font-size:14.8px;font-weight:400;color:#d2d2d2;line-height:19px;top:594px;letter-spacing:0.078px;left:791.90px;">Đơn vị tính: triệu VND</span>
<svg class="a" style="left:1570px;top:572.5px;" width="13" height="14" viewBox="0 0 13 14"><path d="M1 1.200h11L7.800 6.800v5.600l-2.600-1.700V6.800z" fill="none" stroke="#dcdcdc" stroke-width="1.400" stroke-linejoin="round"/></svg>
<svg class="a" style="left:1590px;top:572px;" width="17" height="14" viewBox="0 0 17 14"><path d="M7.200 1.800H1v11h13.400V7.400" fill="none" stroke="#dcdcdc" stroke-width="1.500"/><path d="M1 7.200h6.400v5.600" fill="none" stroke="#dcdcdc" stroke-width="1.500"/><path d="M10.400 1h5v5M15.400 1L9.400 7" fill="none" stroke="#dcdcdc" stroke-width="1.500"/></svg>
<div class="a" style="left:784px;top:629px;width:832px;height:53.5px;background:#25262c;"></div>
<span class="t" style="font-family:'Liberation Sans', sans-serif;font-size:17.6px;font-weight:400;color:#a09d98;line-height:23px;top:646px;left:828.83px;">Số</span>
<span class="t" style="font-family:'Liberation Sans', sans-serif;font-size:17.6px;font-weight:400;color:#a09d98;line-height:23px;top:646px;letter-spacing:0.480px;left:899.90px;">Ngày</span>
<span class="t" style="font-family:'Liberation Sans', sans-serif;font-size:17.6px;font-weight:400;color:#a09d98;line-height:23px;top:633px;letter-spacing:0.055px;left:985.80px;">% hoàn</span>
<span class="t" style="font-family:'Liberation Sans', sans-serif;font-size:17.6px;font-weight:400;color:#a09d98;line-height:23px;top:658px;letter-spacing:-0.006px;left:985.80px;">thành</span>
<span class="t" style="font-family:'Liberation Sans', sans-serif;font-size:17.6px;font-weight:400;color:#a09d98;line-height:23px;top:633px;letter-spacing:0.007px;left:1114.10px;">Giá trị đơn</span>
<span class="t" style="font-family:'Liberation Sans', sans-serif;font-size:17.6px;font-weight:400;color:#a09d98;line-height:23px;top:658px;letter-spacing:0.090px;left:1134.75px;">hàng</span>
<span class="t" style="font-family:'Liberation Sans', sans-serif;font-size:17.6px;font-weight:400;color:#a09d98;line-height:23px;top:646px;letter-spacing:-0.190px;left:1231.80px;">Đã thực hiện</span>
<span class="t" style="font-family:'Liberation Sans', sans-serif;font-size:17.6px;font-weight:400;color:#a09d98;line-height:23px;top:646px;letter-spacing:-0.392px;left:1347.70px;">Khách hàng</span>
<span class="t" style="font-family:'Liberation Sans', sans-serif;font-size:17.6px;font-weight:400;color:#a09d98;line-height:23px;top:646px;letter-spacing:-0.274px;left:1598.00px;width:18.00px;overflow:hidden;">Diễn giải</span>
<span class="t" style="font-family:'Liberation Sans', sans-serif;font-size:17.6px;font-weight:400;color:#ededed;line-height:23px;top:687px;letter-spacing:0.176px;left:788.70px;width:105.30px;overflow:hidden;">DHB10/22-001</span>
<span class="t" style="font-family:'Liberation Sans', sans-serif;font-size:17.6px;font-weight:400;color:#ededed;line-height:23px;top:687px;letter-spacing:0.525px;left:901.50px;">10/10/24</span>
<div class="a" style="left:983px;top:684px;width:105px;height:24px;border:1px solid #187a1e;"></div>
<span class="t" style="font-family:'Liberation Sans', sans-serif;font-size:17.6px;font-weight:400;color:#ededed;line-height:23px;top:687px;letter-spacing:0.031px;left:1023.45px;">0%</span>
<span class="t" style="font-family:'Liberation Sans', sans-serif;font-size:17.6px;font-weight:400;color:#ededed;line-height:23px;top:687px;left:1144.10px;">2,337.71</span>
<span class="t" style="font-family:'Liberation Sans', sans-serif;font-size:17.6px;font-weight:400;color:#ededed;line-height:23px;top:687px;letter-spacing:-0.126px;left:1347.70px;">Công ty Cổ Phần Đầu Tư Hà</span>
<span class="t" style="font-family:'Liberation Sans', sans-serif;font-size:17.6px;font-weight:400;color:#ededed;line-height:23px;top:711px;letter-spacing:-1.008px;left:1347.70px;">Trân</span>
<span class="t" style="font-family:'Liberation Sans', sans-serif;font-size:17.6px;font-weight:400;color:#ededed;line-height:23px;top:687px;letter-spacing:0.656px;left:1598.00px;width:18.00px;overflow:hidden;">Đơn</span>
<span class="t" style="font-family:'Liberation Sans', sans-serif;font-size:17.6px;font-weight:400;color:#ededed;line-height:23px;top:741px;letter-spacing:0.284px;left:788.70px;width:105.30px;overflow:hidden;">DHB11/22-001</span>
<span class="t" style="font-family:'Liberation Sans', sans-serif;font-size:17.6px;font-weight:400;color:#ededed;line-height:23px;top:741px;letter-spacing:0.853px;left:901.50px;">11/11/24</span>
<div class="a" style="left:983px;top:738px;width:105px;height:24px;border:1px solid #187a1e;"></div>
<span class="t" style="font-family:'Liberation Sans', sans-serif;font-size:17.6px;font-weight:400;color:#ededed;line-height:23px;top:741px;letter-spacing:0.031px;left:1023.45px;">0%</span>
<span class="t" style="font-family:'Liberation Sans', sans-serif;font-size:17.6px;font-weight:400;color:#ededed;line-height:23px;top:741px;left:1144.10px;">2,092.42</span>
<span class="t" style="font-family:'Liberation Sans', sans-serif;font-size:17.6px;font-weight:400;color:#ededed;line-height:23px;top:741px;letter-spacing:0.312px;left:1347.70px;">Hoàng Long</span>
<span class="t" style="font-family:'Liberation Sans', sans-serif;font-size:17.6px;font-weight:400;color:#ededed;line-height:23px;top:741px;letter-spacing:0.656px;left:1598.00px;width:18.00px;overflow:hidden;">Đơn</span>
<span class="t" style="font-family:'Liberation Sans', sans-serif;font-size:17.6px;font-weight:400;color:#ededed;line-height:23px;top:765px;left:1598.00px;width:18.00px;overflow:hidden;">Long</span>
<span class="t" style="font-family:'Liberation Sans', sans-serif;font-size:17.6px;font-weight:400;color:#ededed;line-height:23px;top:795px;letter-spacing:0.176px;left:788.70px;width:105.30px;overflow:hidden;">DHB10/22-002</span>
<span class="t" style="font-family:'Liberation Sans', sans-serif;font-size:17.6px;font-weight:400;color:#ededed;line-height:23px;top:795px;letter-spacing:0.525px;left:901.50px;">04/10/24</span>
<div class="a" style="left:983px;top:792px;width:105px;height:24px;border:1px solid #187a1e;"></div>
<span class="t" style="font-family:'Liberation Sans', sans-serif;font-size:17.6px;font-weight:400;color:#ededed;line-height:23px;top:795px;letter-spacing:0.031px;left:1023.45px;">0%</span>
<span class="t" style="font-family:'Liberation Sans', sans-serif;font-size:17.6px;font-weight:400;color:#ededed;line-height:23px;top:795px;left:1144.10px;">1,348.44</span>
<span class="t" style="font-family:'Liberation Sans', sans-serif;font-size:17.6px;font-weight:400;color:#ededed;line-height:23px;top:795px;letter-spacing:0.028px;left:1347.70px;">KUMHO ASIANA PLAZA SAI</span>
<span class="t" style="font-family:'Liberation Sans', sans-serif;font-size:17.6px;font-weight:400;color:#ededed;line-height:23px;top:819px;letter-spacing:-0.359px;left:1347.70px;">GON</span>
<span class="t" style="font-family:'Liberation Sans', sans-serif;font-size:17.6px;font-weight:400;color:#ededed;line-height:23px;top:795px;letter-spacing:0.656px;left:1598.00px;width:18.00px;overflow:hidden;">Đơn</span>
<span class="t" style="font-family:'Liberation Sans', sans-serif;font-size:17.6px;font-weight:400;color:#ededed;line-height:23px;top:819px;left:1598.00px;width:18.00px;overflow:hidden;">ASIANA</span>
<span class="t" style="font-family:'Liberation Sans', sans-serif;font-size:17.6px;font-weight:400;color:#ededed;line-height:23px;top:849px;letter-spacing:0.176px;left:788.70px;width:105.30px;overflow:hidden;">DHB10/22-003</span>
<span class="t" style="font-family:'Liberation Sans', sans-serif;font-size:17.6px;font-weight:400;color:#ededed;line-height:23px;top:849px;letter-spacing:0.525px;left:901.50px;">04/10/24</span>
<div class="a" style="left:983px;top:846px;width:105px;height:24px;border:1px solid #187a1e;"></div>
<span class="t" style="font-family:'Liberation Sans', sans-serif;font-size:17.6px;font-weight:400;color:#ededed;line-height:23px;top:849px;letter-spacing:0.031px;left:1023.45px;">0%</span>
<span class="t" style="font-family:'Liberation Sans', sans-serif;font-size:17.6px;font-weight:400;color:#ededed;line-height:23px;top:849px;left:1144.10px;">1,096.72</span>
<span class="t" style="font-family:'Liberation Sans', sans-serif;font-size:17.6px;font-weight:400;color:#ededed;line-height:23px;top:849px;letter-spacing:-0.188px;left:1347.70px;">TNHH Thanh Xuân</span>
<span class="t" style="font-family:'Liberation Sans', sans-serif;font-size:17.6px;font-weight:400;color:#ededed;line-height:23px;top:849px;letter-spacing:0.656px;left:1598.00px;width:18.00px;overflow:hidden;">Đơn</span>
<span class="t" style="font-family:'Liberation Sans', sans-serif;font-size:17.6px;font-weight:400;color:#ededed;line-height:23px;top:873px;left:1598.00px;width:18.00px;overflow:hidden;">Thanh</span>
<span class="t" style="font-family:'Liberation Sans', sans-serif;font-size:17.6px;font-weight:400;color:#ededed;line-height:23px;top:903px;letter-spacing:0.284px;left:788.70px;width:105.30px;overflow:hidden;">DHB11/22-002</span>
<span class="t" style="font-family:'Liberation Sans', sans-serif;font-size:17.6px;font-weight:400;color:#ededed;line-height:23px;top:903px;letter-spacing:0.689px;left:901.50px;">04/11/24</span>
<div class="a" style="left:983px;top:900px;width:105px;height:24px;border:1px solid #187a1e;"></div>
<span class="t" style="font-family:'Liberation Sans', sans-serif;font-size:17.6px;font-weight:400;color:#ededed;line-height:23px;top:903px;letter-spacing:0.031px;left:1023.45px;">0%</span>
<span class="t" style="font-family:'Liberation Sans', sans-serif;font-size:17.6px;font-weight:400;color:#ededed;line-height:23px;top:903px;left:1158.79px;">843.51</span>
<span class="t" style="font-family:'Liberation Sans', sans-serif;font-size:17.6px;font-weight:400;color:#ededed;line-height:23px;top:903px;letter-spacing:0.127px;left:1347.70px;">Chi nhánh công ty cổ phần</span>
<span class="t" style="font-family:'Liberation Sans', sans-serif;font-size:17.6px;font-weight:400;color:#ededed;line-height:23px;top:903px;letter-spacing:0.656px;left:1598.00px;width:18.00px;overflow:hidden;">Đơn</span>
<div class="a" style="left:784px;top:917px;width:570px;height:7px;background:rgba(96,98,104,.5);border-radius:3.5px;"></div>
<div class="a" style="left:1613px;top:684px;width:2px;height:86px;background:#4b4d53;"></div>
<div class="a" style="left:1634px;top:134px;width:275px;height:798px;background:#2b2d33;border:1px solid #7c99d4;box-shadow:inset 0 0 0 1px #20396a;border-radius:6px;"></div>
<div class="a" style="left:1634px;top:134px;width:277px;height:42px;background:#6495ed;border-radius:6px 6px 0 0;"></div>
<span class="t" style="font-family:'Liberation Sans', sans-serif;font-size:17.3px;font-weight:700;color:#ffffff;line-height:22px;top:146px;letter-spacing:0.145px;left:1649.70px;-webkit-text-stroke:0.3px #ffffff;">Điều kiện lọc</span>
<svg class="a" style="left:1881px;top:148px;" width="9" height="13" viewBox="0 0 9 13"><path d="M2 2L7 6.500L2 11" fill="none" stroke="#ffffff" stroke-width="1.700"/></svg>
<span class="t" style="font-family:'Liberation Sans', sans-serif;font-size:17.6px;font-weight:400;color:#ececec;line-height:23px;top:197px;letter-spacing:0.203px;left:1653.20px;">Từ ngày</span>
<span class="t" style="font-family:'Liberation Sans', sans-serif;font-size:17.6px;font-weight:400;color:#ececec;line-height:23px;top:197px;letter-spacing:0.484px;left:1768.00px;">Đến ngày</span>
<div class="a" style="left:1652px;top:222px;width:105px;height:32px;background:#ffffff;"></div>
<div class="a" style="left:1767px;top:222px;width:105px;height:32px;background:#ffffff;"></div>
<span class="t" style="font-family:'Liberation Sans', sans-serif;font-size:17.6px;font-weight:400;color:#1a1a1a;line-height:23px;top:228px;letter-spacing:0.688px;left:1656.60px;">01/10/24</span>
<span class="t" style="font-family:'Liberation Sans', sans-serif;font-size:17.6px;font-weight:400;color:#1a1a1a;line-height:23px;top:228px;letter-spacing:0.852px;left:1771.30px;">30/11/24</span>
<div class="a" style="left:1659px;top:266px;width:227px;height:3px;background:#1b7fd6;"></div>
<div class="a" style="left:1650.1px;top:259.0px;width:13px;height:13px;border-radius:50%;background:#1188f5;border:2px solid #ffffff;"></div>
<div class="a" style="left:1877.7px;top:259.0px;width:13px;height:13px;border-radius:50%;background:#1188f5;border:2px solid #ffffff;"></div>
<span class="t" style="font-family:'Liberation Sans', sans-serif;font-size:17.6px;font-weight:400;color:#ececec;line-height:23px;top:293px;letter-spacing:0.746px;left:1653.20px;">Vùng tiêu thụ</span>
<div class="a" style="left:1649px;top:318.8px;width:247px;height:28.7px;background:#ffffff;"></div>
<span class="t" style="font-family:'Liberation Sans', sans-serif;font-size:17.6px;font-weight:400;font-style:italic;color:#757b82;line-height:23px;top:324px;letter-spacing:0.395px;left:1653.20px;">Gõ vào giá trị cần tìm</span>
<div class="a" style="left:1872px;top:322.5px;width:1px;height:22px;background:#dddddd;"></div>
<span class="t" style="font-family:'Liberation Sans', sans-serif;font-size:14px;font-weight:400;color:#8a8a8a;line-height:18px;top:325px;left:1878.90px;">0</span>
<div class="a" style="left:1653px;top:359.9px;width:14px;height:14px;border-radius:3px;background:#f1f1f1;"></div>
<span class="t" style="font-family:'Liberation Sans', sans-serif;font-size:17.6px;font-weight:400;color:#ededed;line-height:23px;top:356px;letter-spacing:0.255px;left:1678.80px;">11014</span>
<span class="t" style="font-family:'Liberation Sans', sans-serif;font-size:17.6px;font-weight:400;color:#ededed;line-height:23px;top:356px;letter-spacing:0.275px;left:1747.00px;">Ba Đình</span>
<span class="t" style="font-family:'Liberation Sans', sans-serif;font-size:17.6px;font-weight:400;color:#ededed;line-height:23px;top:356px;left:1873.50px;width:22.50px;overflow:hidden;">Ba Dinh</span>
<div class="a" style="left:1653px;top:390.9px;width:14px;height:14px;border-radius:3px;background:#f1f1f1;"></div>
<span class="t" style="font-family:'Liberation Sans', sans-serif;font-size:17.6px;font-weight:400;color:#ededed;line-height:23px;top:387px;letter-spacing:-0.008px;left:1678.80px;">13000</span>
<span class="t" style="font-family:'Liberation Sans', sans-serif;font-size:17.6px;font-weight:400;color:#ededed;line-height:23px;top:387px;letter-spacing:0.523px;left:1747.00px;">Cao bằng</span>
<span class="t" style="font-family:'Liberation Sans', sans-serif;font-size:17.6px;font-weight:400;color:#ededed;line-height:23px;top:387px;left:1873.50px;width:22.50px;overflow:hidden;">Cao Bang</span>
<div class="a" style="left:1653px;top:421.9px;width:14px;height:14px;border-radius:3px;background:#f1f1f1;"></div>
<span class="t" style="font-family:'Liberation Sans', sans-serif;font-size:17.6px;font-weight:400;color:#ededed;line-height:23px;top:418px;letter-spacing:0.255px;left:1678.80px;">11013</span>
<span class="t" style="font-family:'Liberation Sans', sans-serif;font-size:17.6px;font-weight:400;color:#ededed;line-height:23px;top:418px;letter-spacing:0.207px;left:1747.00px;">Cầu Giấy</span>
<span class="t" style="font-family:'Liberation Sans', sans-serif;font-size:17.6px;font-weight:400;color:#ededed;line-height:23px;top:418px;left:1873.50px;width:22.50px;overflow:hidden;">Cau Giay</span>
<div class="a" style="left:1653px;top:452.9px;width:14px;height:14px;border-radius:3px;background:#f1f1f1;"></div>
<span class="t" style="font-family:'Liberation Sans', sans-serif;font-size:17.6px;font-weight:400;color:#ededed;line-height:23px;top:449px;letter-spacing:-0.008px;left:1678.80px;">40010</span>
<span class="t" style="font-family:'Liberation Sans', sans-serif;font-size:17.6px;font-weight:400;color:#ededed;line-height:23px;top:449px;letter-spacing:0.433px;left:1747.00px;">Châu Âu</span>
<div class="a" style="left:1653px;top:483.9px;width:14px;height:14px;border-radius:3px;background:#f1f1f1;"></div>
<span class="t" style="font-family:'Liberation Sans', sans-serif;font-size:17.6px;font-weight:400;color:#ededed;line-height:23px;top:480px;letter-spacing:-0.008px;left:1678.80px;">21003</span>
<span class="t" style="font-family:'Liberation Sans', sans-serif;font-size:17.6px;font-weight:400;color:#ededed;line-height:23px;top:480px;letter-spacing:0.203px;left:1747.00px;">Củ Chi</span>
<span class="t" style="font-family:'Liberation Sans', sans-serif;font-size:17.6px;font-weight:400;color:#ededed;line-height:23px;top:480px;left:1873.50px;width:22.50px;overflow:hidden;">Cu Chi</span>
<div class="a" style="left:1653px;top:514.9px;width:14px;height:14px;border-radius:3px;background:#f1f1f1;"></div>
<span class="t" style="font-family:'Liberation Sans', sans-serif;font-size:17.6px;font-weight:400;color:#ededed;line-height:23px;top:511px;letter-spacing:0.255px;left:1678.80px;">11012</span>
<span class="t" style="font-family:'Liberation Sans', sans-serif;font-size:17.6px;font-weight:400;color:#ededed;line-height:23px;top:511px;letter-spacing:0.900px;left:1747.00px;">Đông Anh</span>
<span class="t" style="font-family:'Liberation Sans', sans-serif;font-size:17.6px;font-weight:400;color:#ededed;line-height:23px;top:511px;left:1873.50px;width:22.50px;overflow:hidden;">Dong Anh</span>
<div class="a" style="left:1653px;top:545.9px;width:14px;height:14px;border-radius:3px;background:#f1f1f1;"></div>
<span class="t" style="font-family:'Liberation Sans', sans-serif;font-size:17.6px;font-weight:400;color:#ededed;line-height:23px;top:542px;letter-spacing:0.517px;left:1678.80px;">11011</span>
<span class="t" style="font-family:'Liberation Sans', sans-serif;font-size:17.6px;font-weight:400;color:#ededed;line-height:23px;top:542px;letter-spacing:0.507px;left:1747.00px;">Đống Đa</span>
<span class="t" style="font-family:'Liberation Sans', sans-serif;font-size:17.6px;font-weight:400;color:#ededed;line-height:23px;top:542px;left:1873.50px;width:22.50px;overflow:hidden;">Dong Da</span>
<div class="a" style="left:1653px;top:576.9px;width:14px;height:14px;border-radius:3px;background:#f1f1f1;"></div>
<span class="t" style="font-family:'Liberation Sans', sans-serif;font-size:17.6px;font-weight:400;color:#ededed;line-height:23px;top:573px;letter-spacing:0.255px;left:1678.80px;">11009</span>
<span class="t" style="font-family:'Liberation Sans', sans-serif;font-size:17.6px;font-weight:400;color:#ededed;line-height:23px;top:573px;letter-spacing:0.507px;left:1747.00px;">Hà Đông</span>
<span class="t" style="font-family:'Liberation Sans', sans-serif;font-size:17.6px;font-weight:400;color:#ededed;line-height:23px;top:573px;left:1873.50px;width:22.50px;overflow:hidden;">Ha Dong</span>
<div class="a" style="left:1893px;top:352px;width:2px;height:162px;background:#4b4d53;"></div>
<div class="a" style="left:1673px;top:593.5px;width:104px;height:2px;background:#4b4d53;"></div>
<span class="t" style="font-family:'Liberation Sans', sans-serif;font-size:17.6px;font-weight:400;color:#ececec;line-height:23px;top:614px;letter-spacing:0.508px;left:1653.20px;">Khách hàng</span>
<div class="a" style="left:1649px;top:640.0px;width:247px;height:28.7px;background:#ffffff;"></div>
<span class="t" style="font-family:'Liberation Sans', sans-serif;font-size:17.6px;font-weight:400;font-style:italic;color:#757b82;line-height:23px;top:645px;letter-spacing:0.395px;left:1653.20px;">Gõ vào giá trị cần tìm</span>
<div class="a" style="left:1872px;top:643.7px;width:1px;height:22px;background:#dddddd;"></div>
<span class="t" style="font-family:'Liberation Sans', sans-serif;font-size:14px;font-weight:400;color:#8a8a8a;line-height:18px;top:646px;left:1878.90px;">0</span>
<div class="a" style="left:1653px;top:681.1px;width:14px;height:14px;border-radius:3px;background:#f1f1f1;"></div>
<span class="t" style="font-family:'Liberation Sans', sans-serif;font-size:17.6px;font-weight:400;color:#ededed;line-height:23px;top:677px;letter-spacing:0.014px;left:1678.80px;">1200101</span>
<span class="t" style="font-family:'Liberation Sans', sans-serif;font-size:17.6px;font-weight:400;color:#ededed;line-height:23px;top:677px;letter-spacing:0.170px;left:1766.80px;width:128.70px;overflow:hidden;">A COLMEIA DO MINHO</span>
<div class="a" style="left:1653px;top:712.1px;width:14px;height:14px;border-radius:3px;background:#f1f1f1;"></div>
<span class="t" style="font-family:'Liberation Sans', sans-serif;font-size:17.6px;font-weight:400;color:#ededed;line-height:23px;top:708px;letter-spacing:0.014px;left:1678.80px;">1200102</span>
<span class="t" style="font-family:'Liberation Sans', sans-serif;font-size:17.6px;font-weight:400;color:#ededed;line-height:23px;top:708px;letter-spacing:-0.050px;left:1766.80px;width:128.70px;overflow:hidden;">A MARKETING INC</span>
<div class="a" style="left:1653px;top:743.1px;width:14px;height:14px;border-radius:3px;background:#f1f1f1;"></div>
<span class="t" style="font-family:'Liberation Sans', sans-serif;font-size:17.6px;font-weight:400;color:#ededed;line-height:23px;top:739px;letter-spacing:0.014px;left:1678.80px;">1200103</span>
<span class="t" style="font-family:'Liberation Sans', sans-serif;font-size:17.6px;font-weight:400;color:#ededed;line-height:23px;top:739px;letter-spacing:-0.528px;left:1766.80px;width:128.70px;overflow:hidden;">ABSORBA BOUTIQUE</span>
<div class="a" style="left:1653px;top:774.1px;width:14px;height:14px;border-radius:3px;background:#f1f1f1;"></div>
<span class="t" style="font-family:'Liberation Sans', sans-serif;font-size:17.6px;font-weight:400;color:#ededed;line-height:23px;top:770px;letter-spacing:0.014px;left:1678.80px;">1200104</span>
<span class="t" style="font-family:'Liberation Sans', sans-serif;font-size:17.6px;font-weight:400;color:#ededed;line-height:23px;top:770px;letter-spacing:-0.383px;left:1766.80px;width:128.70px;overflow:hidden;">AFGHAN LOSHIMA</span>
<div class="a" style="left:1653px;top:805.1px;width:14px;height:14px;border-radius:3px;background:#f1f1f1;"></div>
<span class="t" style="font-family:'Liberation Sans', sans-serif;font-size:17.6px;font-weight:400;color:#ededed;line-height:23px;top:801px;letter-spacing:0.014px;left:1678.80px;">1200105</span>
<span class="t" style="font-family:'Liberation Sans', sans-serif;font-size:17.6px;font-weight:400;color:#ededed;line-height:23px;top:801px;letter-spacing:0.336px;left:1766.80px;width:128.70px;overflow:hidden;">ANADOLU MARKETING</span>
<div class="a" style="left:1653px;top:836.1px;width:14px;height:14px;border-radius:3px;background:#f1f1f1;"></div>
<span class="t" style="font-family:'Liberation Sans', sans-serif;font-size:17.6px;font-weight:400;color:#ededed;line-height:23px;top:832px;letter-spacing:0.014px;left:1678.80px;">210230</span>
<span class="t" style="font-family:'Liberation Sans', sans-serif;font-size:17.6px;font-weight:400;color:#ededed;line-height:23px;top:832px;letter-spacing:0.180px;left:1766.80px;width:128.70px;overflow:hidden;">Anh Toán ( Đường</span>
<div class="a" style="left:1653px;top:867.1px;width:14px;height:14px;border-radius:3px;background:#f1f1f1;"></div>
<span class="t" style="font-family:'Liberation Sans', sans-serif;font-size:17.6px;font-weight:400;color:#ededed;line-height:23px;top:863px;letter-spacing:0.014px;left:1678.80px;">210235</span>
<span class="t" style="font-family:'Liberation Sans', sans-serif;font-size:17.6px;font-weight:400;color:#ededed;line-height:23px;top:863px;letter-spacing:0.737px;left:1766.80px;width:128.70px;overflow:hidden;">Anh Toàn- May</span>
<div class="a" style="left:1653px;top:898.1px;width:14px;height:14px;border-radius:3px;background:#f1f1f1;"></div>
<span class="t" style="font-family:'Liberation Sans', sans-serif;font-size:17.6px;font-weight:400;color:#ededed;line-height:23px;top:894px;letter-spacing:0.014px;left:1678.80px;">1200106</span>
<span class="t" style="font-family:'Liberation Sans', sans-serif;font-size:17.6px;font-weight:400;color:#ededed;line-height:23px;top:894px;letter-spacing:0.007px;left:1766.80px;width:128.70px;overflow:hidden;">ANQUI FANGRONG</span>
<div class="a" style="left:1893.5px;top:674px;width:2px;height:144px;background:#4b4d53;"></div>
<div class="a" style="left:1672px;top:916px;width:21px;height:2px;background:#4b4d53;"></div>
<div class="a" style="left:345.5px;top:944px;width:127px;height:33px;background:#6495ed;border-radius:3px;"></div>
<div class="a" style="left:481.5px;top:944px;width:221px;height:33px;background:#222328;border-radius:3px;"></div>
<div class="a" style="left:712.5px;top:944px;width:211.5px;height:33px;background:#222328;border-radius:3px;"></div>
<span class="t" style="font-family:'Liberation Sans', sans-serif;font-size:17.6px;font-weight:700;color:#ffffff;line-height:23px;top:950px;letter-spacing:0.220px;left:354.50px;-webkit-text-stroke:0.3px #ffffff;">TỔNG QUAN</span>
<span class="t" style="font-family:'Liberation Sans', sans-serif;font-size:17.6px;font-weight:700;color:#e4e4e4;line-height:23px;top:950px;letter-spacing:0.352px;left:491.50px;-webkit-text-stroke:0.3px #e4e4e4;">QUY TRÌNH BÁN HÀNG</span>
<span class="t" style="font-family:'Liberation Sans', sans-serif;font-size:17.6px;font-weight:700;color:#e4e4e4;line-height:23px;top:950px;left:722.50px;-webkit-text-stroke:0.3px #e4e4e4;">DANH SÁCH BÁO CÁO</span>
<svg class="a" style="left:1861px;top:952px;" width="14" height="18" viewBox="0 0 14 18"><path d="M3.600 1.500h6.800M4.800 1.500v7l-1.800 2.200h8l-1.800-2.200v-7M7 10.700v6" fill="none" stroke="#ececec" stroke-width="1.500"/></svg>
<svg class="a" style="left:1886px;top:950px;" width="22" height="21" viewBox="0 0 22 21"><path d="M11 1.800l2.750 6.100 6.650.700-4.950 4.500 1.400 6.550L11 16.300l-5.850 3.350 1.400-6.550L1.600 8.600l6.650-.700z" fill="none" stroke="#ececec" stroke-width="1.600" stroke-linejoin="round"/></svg>
</body></html>
